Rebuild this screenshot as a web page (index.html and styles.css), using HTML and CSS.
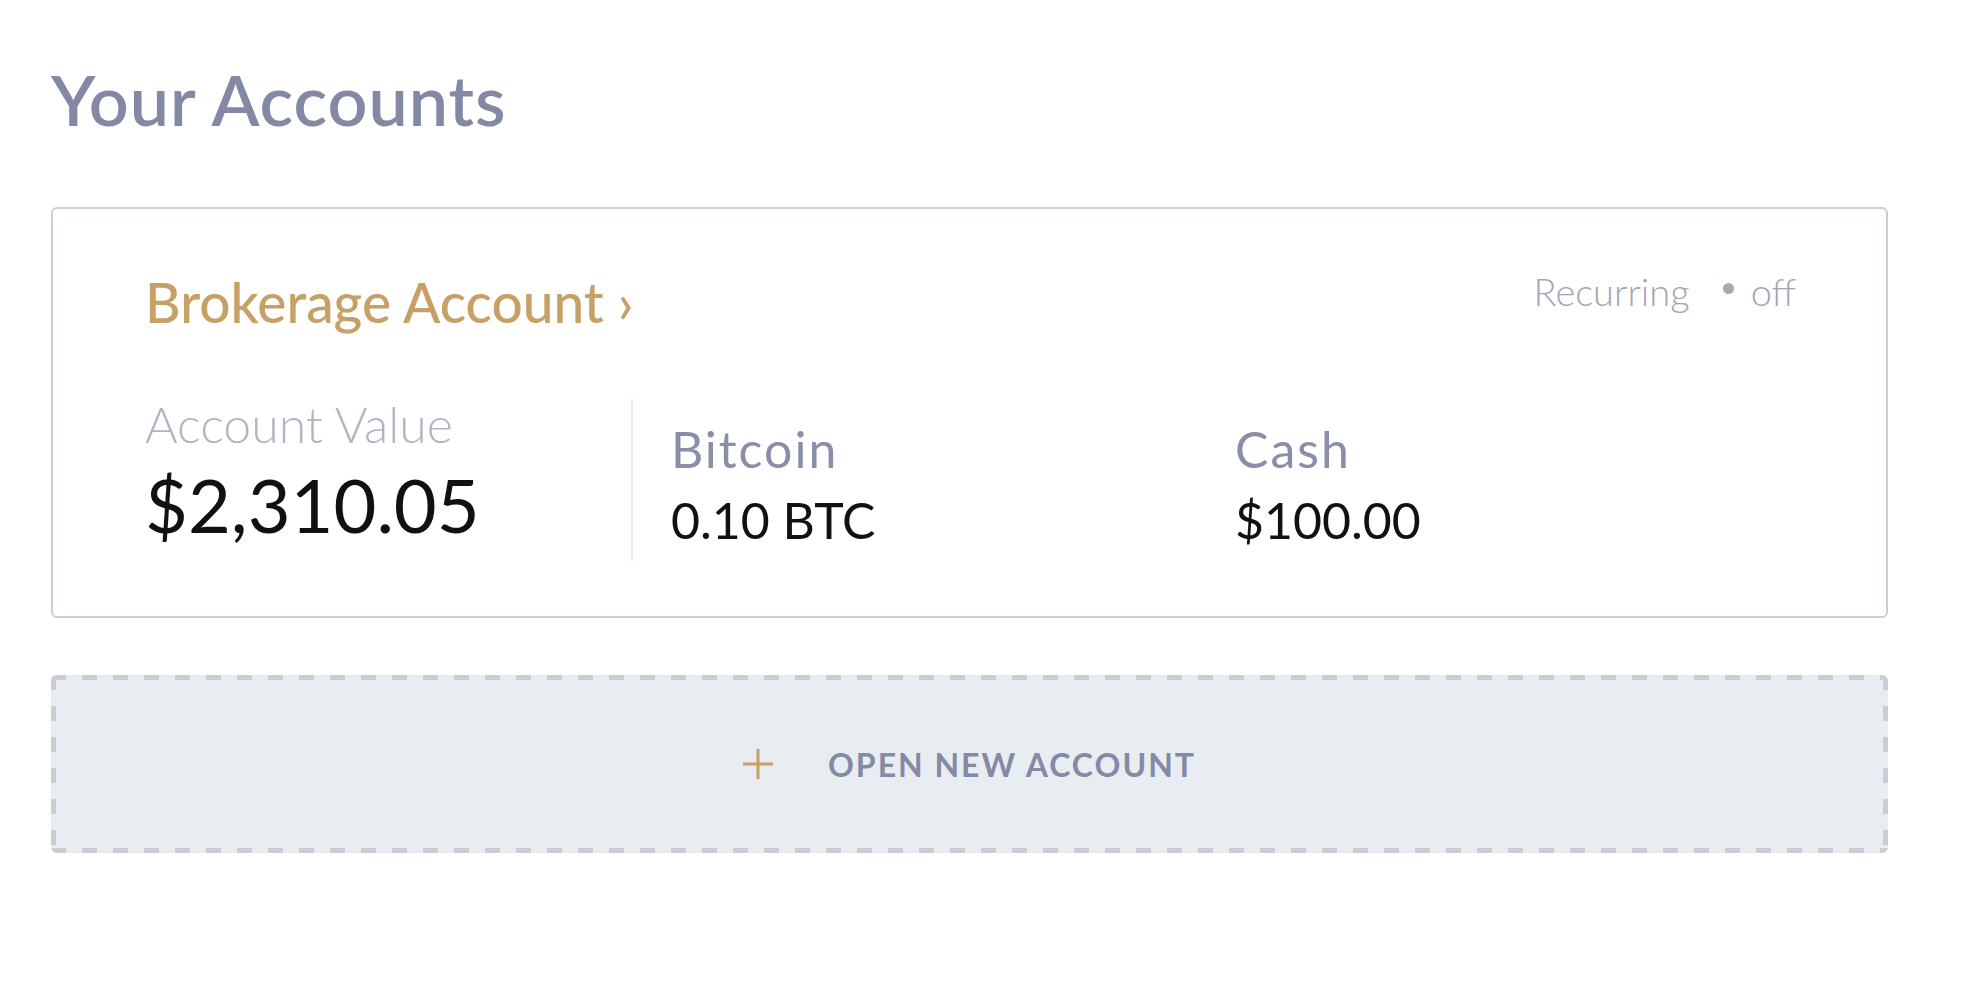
FILE: index.html
```html
<!DOCTYPE html>
<html lang="en">
<head>
    <meta charset="UTF-8">
    <title>Your Accounts</title>
    <link rel="stylesheet" href="styles.css">
</head>
<body>
    <main class="page">
        <h1 class="page-title">Your Accounts</h1>

        <section class="account-card">
            <div class="account-header">
                <a class="account-name" href="#">Brokerage Account ›</a>
                <div class="recurring">
                    <span>Recurring</span>
                    <span class="recurring-dot"></span>
                    <span>off</span>
                </div>
            </div>
            <div class="account-stats">
                <div class="stat stat-main">
                    <div class="stat-label">Account Value</div>
                    <div class="stat-value">$2,310.05</div>
                </div>
                <div class="stat stat-asset">
                    <div class="asset-label">Bitcoin</div>
                    <div class="asset-value">0.10 BTC</div>
                </div>
                <div class="stat stat-asset">
                    <div class="asset-label">Cash</div>
                    <div class="asset-value">$100.00</div>
                </div>
            </div>
        </section>

        <button class="new-account" type="button">
            <svg class="plus-icon" width="30" height="30" viewBox="0 0 30 30">
                <path d="M15 0 V30 M0 15 H30" stroke="#c6a064" stroke-width="3" fill="none"/>
            </svg>
            <span>Open New Account</span>
        </button>
    </main>
</body>
</html>
```

FILE: styles.css
```css
body {
    margin: 0;
    font-family: Lato, "Open Sans", sans-serif;
    background-color: #fff;
    color: #111;
}
.page {
    padding: 57px 80px 0 51px;
}
.page-title {
    margin: 0 0 66px 0;
    font-size: 70px;
    line-height: 1.2;
    font-weight: 600;
    letter-spacing: 1px;
    color: #8389a5;
}
.account-card {
    border: 2px solid #c9cedb;
    border-radius: 6px;
    padding: 60px 90px 54px 92px;
}
.account-header {
    display: flex;
    justify-content: space-between;
    align-items: flex-start;
}
.account-name {
    font-size: 55px;
    line-height: 1.2;
    font-weight: 500;
    color: #c6a064;
    text-decoration: none;
}
.recurring {
    display: flex;
    align-items: center;
    font-size: 38px;
    line-height: 1.2;
    font-weight: 300;
    color: #a3a5b5;
}
.recurring-dot {
    width: 11px;
    height: 11px;
    border-radius: 50%;
    background-color: #a6a8b7;
    margin: -6px 17px 0 33px;
}
.account-stats {
    display: flex;
    margin-top: 64px;
}
.stat-main {
    width: 486px;
    border-right: 2px solid #ececf0;
    padding-bottom: 20px;
}
.stat-label {
    font-size: 50px;
    line-height: 1;
    font-weight: 300;
    color: #b2b4c3;
}
.stat-value {
    margin-top: 19px;
    font-size: 74px;
    line-height: 1;
}
.stat-asset {
    padding-top: 25px;
}
.stat-asset:nth-child(2) {
    width: 564px;
    padding-left: 38px;
}
.asset-label {
    font-size: 50px;
    line-height: 1;
    letter-spacing: 2px;
    color: #898ea9;
}
.asset-value {
    margin-top: 21px;
    font-size: 50px;
    line-height: 1;
}
.new-account {
    display: flex;
    align-items: center;
    justify-content: center;
    gap: 55px;
    width: 100%;
    height: 178px;
    margin-top: 57px;
    border: none;
    border-radius: 6px;
    background:
        repeating-linear-gradient(90deg, #cbccd6 0 15px, transparent 15px 31px) top left / 100% 5px no-repeat,
        repeating-linear-gradient(90deg, #cbccd6 0 15px, transparent 15px 31px) bottom left / 100% 5px no-repeat,
        repeating-linear-gradient(180deg, #cbccd6 0 15px, transparent 15px 31px) top left / 5px 100% no-repeat,
        repeating-linear-gradient(180deg, #cbccd6 0 15px, transparent 15px 31px) top right / 5px 100% no-repeat,
        #e8edf1;
    font-family: Lato, "Open Sans", sans-serif;
    font-size: 32px;
    font-weight: 700;
    letter-spacing: 2px;
    text-transform: uppercase;
    color: #8489a6;
    cursor: pointer;
}
.plus-icon {
    display: block;
}
```
